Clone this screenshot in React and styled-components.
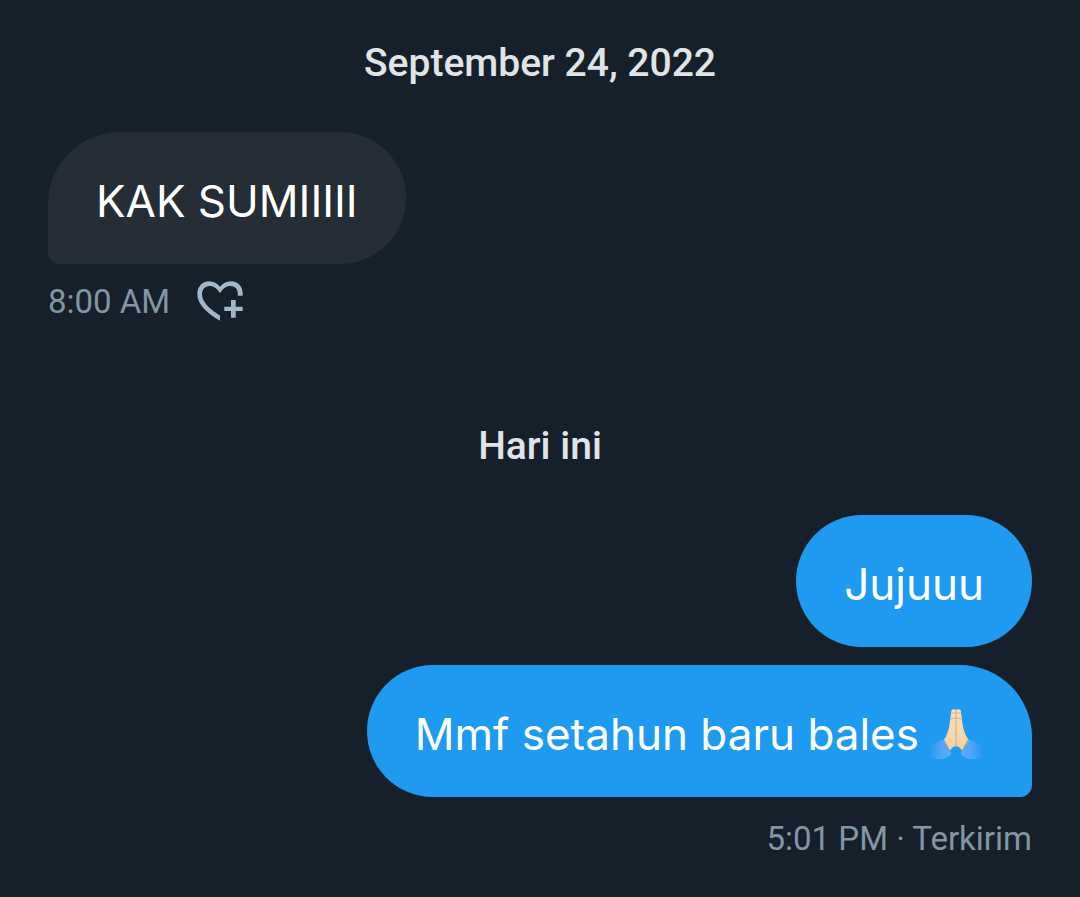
import React from "react";
import styled, { createGlobalStyle } from "styled-components";

const GlobalStyle = createGlobalStyle`
  * { box-sizing: border-box; }
  body { margin: 0; background: #16202a; }
`;

const Conversation = styled.main`
  display: flex;
  flex-direction: column;
  min-height: 100vh;
  padding: 39px 48px 32px;
  background: #16202a;
  font-family: Roboto, "Liberation Sans", sans-serif;
`;

const DaySection = styled.section`
  display: flex;
  flex-direction: column;
  & + & { margin-top: 98px; }
`;

const DayHeading = styled.h2`
  margin: 0 0 45px;
  color: #e1e4e7;
  font-size: 39px;
  font-weight: 500;
  line-height: 48px;
  text-align: center;
`;

const Messages = styled.div`
  display: flex;
  flex-direction: column;
  gap: 18px;
  align-items: ${({ $own }) => ($own ? "flex-end" : "flex-start")};
`;

const corners = {
  left: "72px 66px 66px 12px",
  right: "66px 72px 12px 66px",
  none: "66px",
};

const Bubble = styled.p`
  display: flex;
  align-items: center;
  gap: 12px;
  margin: 0;
  padding: 41px 48px 35px;
  border-radius: ${({ $tail }) => corners[$tail]};
  background: ${({ $own }) => ($own ? "#1e9bf0" : "#252e36")};
  color: #ffffff;
  font-family: Inter, "Liberation Sans", sans-serif;
  font-size: 44px;
  line-height: 56px;
`;

const Meta = styled.div`
  display: flex;
  align-items: center;
  gap: 26px;
  justify-content: ${({ $own }) => ($own ? "flex-end" : "flex-start")};
  margin-top: ${({ $own }) => ($own ? "20px" : "16px")};
  color: #8296a3;
  font-size: 33px;
  line-height: 44px;
`;

const ReactButton = styled.button`
  display: flex;
  padding: 0;
  border: 0;
  background: none;
  color: #a2b7c7;
  cursor: pointer;
`;

const HeartPlus = () => (
  <svg width="48" height="42" viewBox="0 0 48 42" fill="currentColor" aria-hidden="true">
    <path d="M24 39.8C13 33.5 1.3 24.5 1.3 13C1.3 5.5 6.5 .3 13 .3C17.5 .3 21.5 2.5 24 5.7C26.5 2.5 30.5 .3 35 .3C42 .3 46.7 5.5 46.7 12.5V14.7H41.8V12.5C41.8 8 39 4.9 34.5 4.9C30 4.9 26.8 7.5 24 12.2C21.2 7.5 18 4.9 13.5 4.9C9 4.9 6 8.5 6 13C6 21.5 15 29 24 34.5Z" />
    <path d="M35 19h4.7v6.7h7V30h-7v6.7H35V30h-6.7v-4.3H35Z" />
  </svg>
);

const FoldedHands = () => (
  <svg width="53" height="50" viewBox="0 0 53 50" role="img" aria-label="🙏🏻">
    <defs>
      <linearGradient id="sleeveLeft" x1="0" x2="1">
        <stop offset="0" stopColor="#429ff5" stopOpacity="0.4" />
        <stop offset="0.5" stopColor="#4ea5f7" />
        <stop offset="1" stopColor="#61aefa" />
      </linearGradient>
      <linearGradient id="sleeveRight" x1="1" x2="0">
        <stop offset="0" stopColor="#429ff5" stopOpacity="0.4" />
        <stop offset="0.5" stopColor="#4ea5f7" />
        <stop offset="1" stopColor="#61aefa" />
      </linearGradient>
      <linearGradient id="skin" x1="0" x2="0" y1="0" y2="1">
        <stop offset="0" stopColor="#fbe0bc" />
        <stop offset="1" stopColor="#f4cf9f" />
      </linearGradient>
    </defs>
    <path fill="url(#sleeveLeft)" d="M0 36Q6 32 12.5 30L20.5 45Q17 48 12 50H0Z" />
    <path fill="url(#sleeveRight)" d="M50 36Q44 32 37.5 30L29.5 45Q33 48 38 50H50Z" />
    <path fill="url(#skin)" d="M20.5 1Q23-.5 25 .8Q27-.5 29.7 1L31.7 16Q33 25 38 31.5L31.5 42L28.5 38.5Q25 36 21.5 38.5L18.5 42L12.5 31.5Q17 25 18.5 16Z" />
    <path fill="none" stroke="#cfac82" strokeWidth="1" d="M25 1V37M20.5 4.5Q22.5 3 25 4.5Q27.5 3 29.7 4.5M20 10Q22.5 8 25 9.5Q27.5 8 30 10" />
    <path fill="none" stroke="#6f93ad" strokeWidth="1" d="M12.5 30.5L18.5 42M37.5 30.5L31.5 42" />
    <path fill="none" stroke="#3b8fd8" strokeWidth="1" d="M0 36Q6 32 12.5 30M50 36Q44 32 37.5 30" opacity=".6" />
  </svg>
);

export default function App() {
  return (
    <>
      <GlobalStyle />
      <Conversation>
        <DaySection>
          <DayHeading>September 24, 2022</DayHeading>
          <Messages>
            <Bubble $tail="left">KAK SUMIIIII</Bubble>
          </Messages>
          <Meta>
            <time>8:00 AM</time>
            <ReactButton type="button" aria-label="Tambahkan reaksi">
              <HeartPlus />
            </ReactButton>
          </Meta>
        </DaySection>
        <DaySection>
          <DayHeading>Hari ini</DayHeading>
          <Messages $own>
            <Bubble $own $tail="none">Jujuuu</Bubble>
            <Bubble $own $tail="right">
              Mmf setahun baru bales
              <FoldedHands />
            </Bubble>
          </Messages>
          <Meta $own>
            <span>5:01 PM · Terkirim</span>
          </Meta>
        </DaySection>
      </Conversation>
    </>
  );
}
